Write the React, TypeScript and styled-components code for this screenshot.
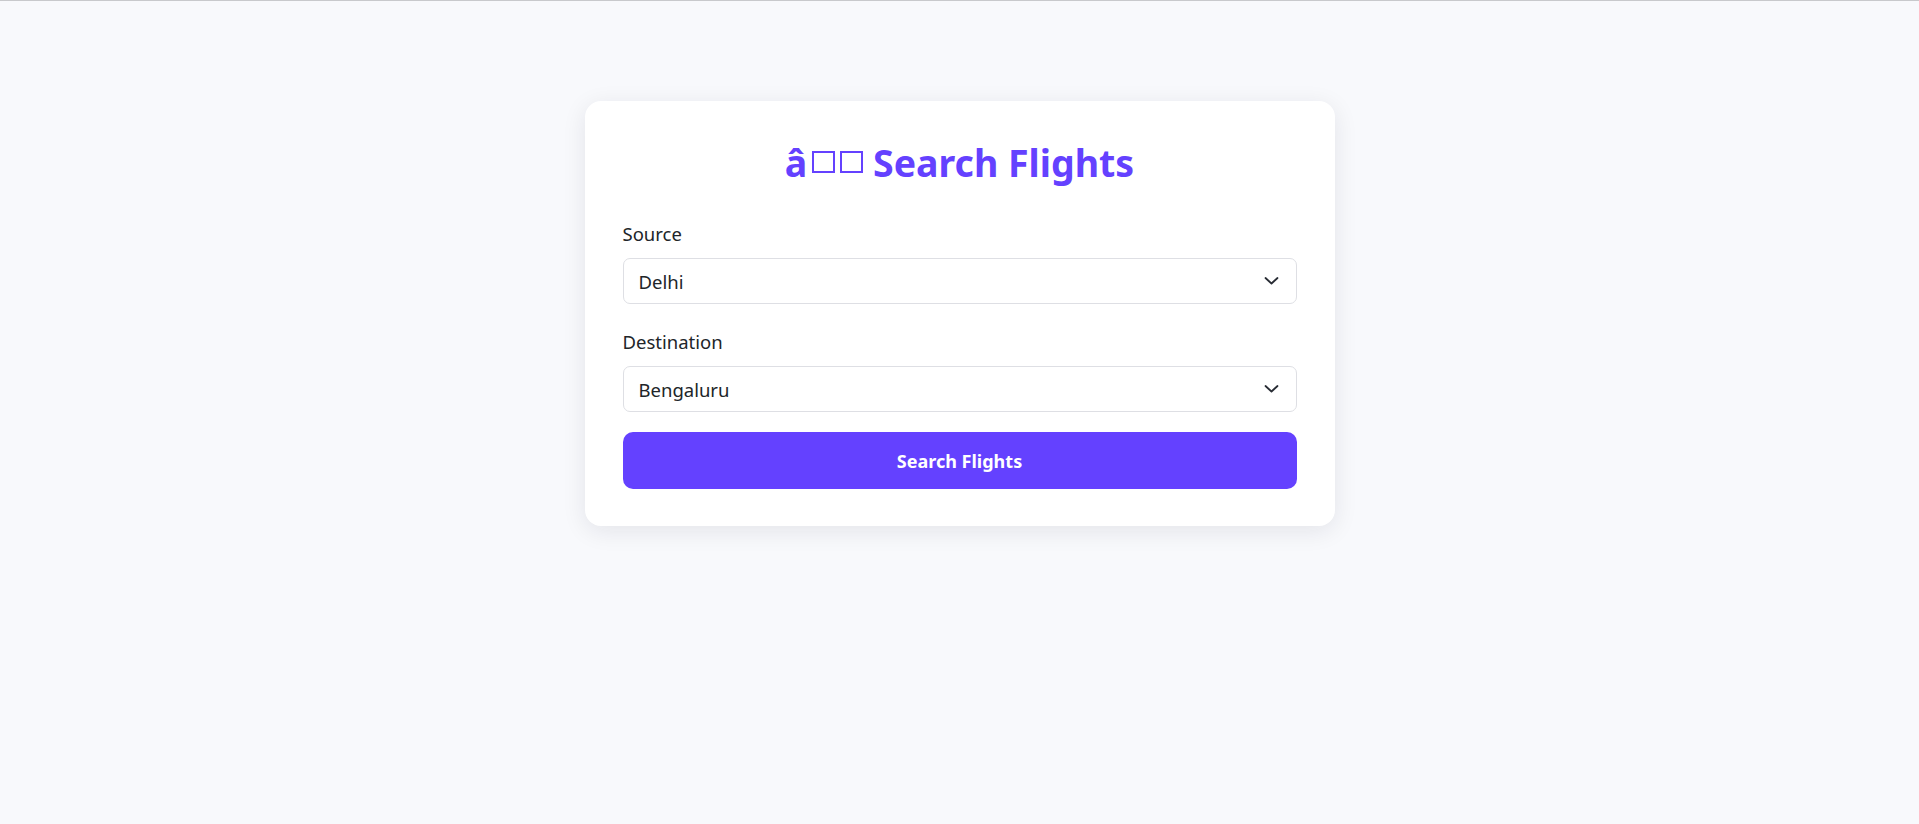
import React, { useState } from 'react';
import styled, { createGlobalStyle } from 'styled-components';

const PURPLE = 'rgba(100, 65, 255, 1)';
const TEXT_COLOR = 'rgba(33, 37, 41, 1)';

const CITIES = ['Delhi', 'Mumbai', 'Bengaluru', 'Chennai', 'Kolkata', 'Hyderabad'];

const GlobalStyle = createGlobalStyle`
  * {
    box-sizing: border-box;
  }
  html, body {
    margin: 0;
    padding: 0;
    background-color: rgba(248, 249, 252, 1);
  }
  body {
    font-family: "Segoe UI", "Noto Sans", "Open Sans", sans-serif;
    color: ${TEXT_COLOR};
  }
`;

const Page = styled.div`
  min-height: 100vh;
  border-top: 1px solid rgba(200, 201, 204, 1);
  padding-top: 100px;
  display: flex;
  flex-direction: column;
  align-items: center;
`;

const Card = styled.div`
  width: 750px;
  padding: 38px 38px 37px;
  background-color: rgba(255, 255, 255, 1);
  border-radius: 16px;
  box-shadow: 0 5px 24px rgba(20, 24, 40, 0.09);
`;

const Title = styled.h1`
  margin: 0 0 29px;
  text-align: center;
  font-size: 37.5px;
  line-height: 48px;
  font-weight: 700;
  color: ${PURPLE};
`;

// missing-glyph boxes of the mis-decoded airplane emoji
const Tofu = styled.span`
  display: inline-block;
  width: 23px;
  height: 22px;
  margin-left: 5px;
  border: 2px solid ${PURPLE};
  overflow: hidden;
  font-size: 16px;
  line-height: 18px;
  color: transparent;
  vertical-align: 4px;
`;

const Form = styled.form`
  display: flex;
  flex-direction: column;
  gap: 20px;
`;

const Field = styled.div`
  display: flex;
  flex-direction: column;
`;

const Label = styled.label`
  font-size: 18.5px;
  line-height: 36px;
  margin-bottom: 6px;
  color: ${TEXT_COLOR};
`;

const SelectWrap = styled.div`
  position: relative;
`;

const Select = styled.select`
  width: 100%;
  height: 46px;
  padding: 0 48px 0 15px;
  font-family: inherit;
  font-size: 18.5px;
  color: ${TEXT_COLOR};
  background-color: rgba(255, 255, 255, 1);
  border: 1px solid rgba(222, 223, 228, 1);
  border-radius: 7px;
  appearance: none;
  outline: none;
`;

const Chevron = styled.svg`
  position: absolute;
  right: 18px;
  top: 50%;
  transform: translateY(-50%);
  pointer-events: none;
`;

const SubmitButton = styled.button`
  height: 57px;
  border: none;
  border-radius: 10px;
  background-color: ${PURPLE};
  color: rgba(255, 255, 255, 1);
  font-family: inherit;
  font-size: 18px;
  font-weight: 700;
  cursor: pointer;
`;

function CitySelect({ id, value, onChange }: { id: string; value: string; onChange: (v: string) => void }) {
  return (
    <SelectWrap>
      <Select id={id} value={value} onChange={(e) => onChange(e.target.value)}>
        {CITIES.map((c) => (
          <option key={c} value={c}>
            {c}
          </option>
        ))}
      </Select>
      <Chevron width='15' height='9' viewBox='0 0 15 9' fill='none'>
        <path d='M1.5 1.5 L7.5 7 L13.5 1.5' stroke='rgba(40, 44, 52, 1)' strokeWidth='1.8' strokeLinecap='round' strokeLinejoin='round' />
      </Chevron>
    </SelectWrap>
  );
}

export default function App() {
  const [source, setSource] = useState('Delhi');
  const [destination, setDestination] = useState('Bengaluru');

  return (
    <>
      <GlobalStyle />
      <Page>
        <Card>
          <Title>
            {'\u00e2'}
            <Tofu>{'\u009c'}</Tofu>
            <Tofu>{'\u0088'}</Tofu> Search Flights
          </Title>
          <Form onSubmit={(e) => e.preventDefault()}>
            <Field>
              <Label htmlFor='source'>Source</Label>
              <CitySelect id='source' value={source} onChange={setSource} />
            </Field>
            <Field>
              <Label htmlFor='destination'>Destination</Label>
              <CitySelect id='destination' value={destination} onChange={setDestination} />
            </Field>
            <SubmitButton type='submit'>Search Flights</SubmitButton>
          </Form>
        </Card>
      </Page>
    </>
  );
}
